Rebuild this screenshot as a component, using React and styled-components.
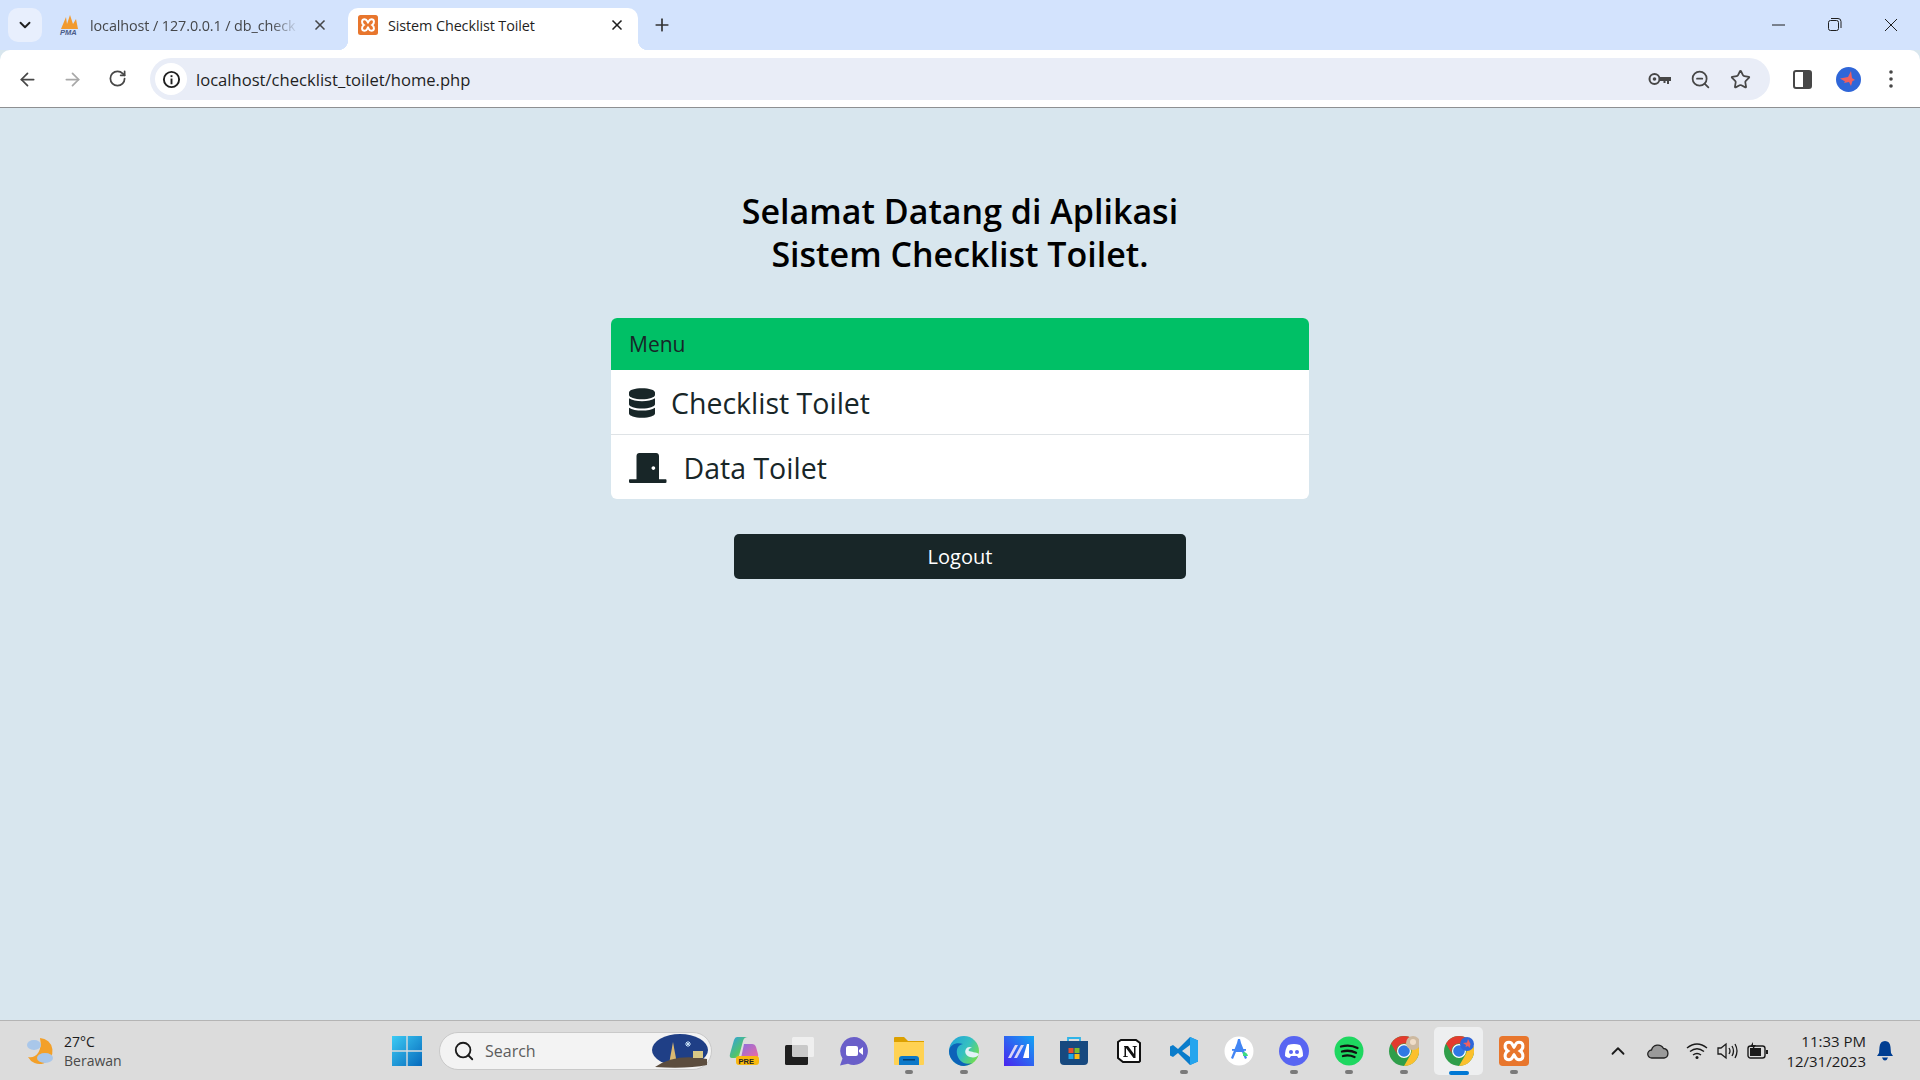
import React from 'react';
import styled, { createGlobalStyle } from 'styled-components';
import { FaDatabase, FaDoorClosed } from 'react-icons/fa';
import { ChevronDown, ChevronUp, X, Plus, ArrowLeft, ArrowRight, RotateCw, Star, ZoomOut, Search } from 'lucide-react';

const Global = createGlobalStyle`
    html, body { margin: 0; padding: 0; height: 100%; overflow: hidden; }
    body { font-family: "Open Sans", "Noto Sans", sans-serif; }
    * { box-sizing: border-box; }
`;

const Shell = styled.div`
    display: flex;
    flex-direction: column;
    height: 100vh;
    background: #d8e6ee;
`;

// ---- browser chrome
const TabStrip = styled.div`
    display: flex;
    height: 50px;
    padding-top: 8px;
    background: #d3e3fd;
`;

const TabList = styled.button`
    width: 34px;
    height: 34px;
    margin-left: 8px;
    border: 0;
    padding: 0;
    border-radius: 10px;
    background: #e8effd;
    display: flex;
    align-items: center;
    justify-content: center;
    color: #1f1f1f;
`;

const Tab = styled.div`
    position: relative;
    display: flex;
    align-items: center;
    width: ${p => p.$width}px;
    margin-left: ${p => p.$left}px;
    padding: 0 ${p => p.$active ? 13 : 4}px 8px ${p => p.$active ? 10 : 5}px;
    gap: ${p => p.$active ? 10 : 9}px;
    height: 42px;
    border-radius: 10px 10px 0 0;
    background: ${p => p.$active ? '#fff' : 'transparent'};
    color: ${p => p.$active ? '#1f1f1f' : '#45474a'};
    font-size: 14.4px;
    ${p => p.$active && `
        &::before, &::after {
            content: '';
            position: absolute;
            bottom: 0;
            width: 10px;
            height: 10px;
        }
        &::before { left: -10px; background: radial-gradient(circle at 0 0, transparent 10px, #fff 10.5px); }
        &::after { right: -10px; background: radial-gradient(circle at 100% 0, transparent 10px, #fff 10.5px); }
    `}
`;

const TabTitle = styled.span`
    flex: 1;
    white-space: nowrap;
    letter-spacing: -0.1px;
    ${p => p.$fade && `
        -webkit-mask-image: linear-gradient(to right, #000 85%, transparent 98%);
        mask-image: linear-gradient(to right, #000 85%, transparent 98%);
    `}
`;

const NewTab = styled.div`
    margin-left: 14px;
    height: 34px;
    display: flex;
    align-items: center;
    color: #333;
`;

const WindowControls = styled.div`
    margin-left: auto;
    display: flex;
    height: 34px;
    align-items: center;
    padding-right: 1px;
`;

const WinButton = styled.div`
    width: ${p => p.$w}px;
    display: flex;
    justify-content: center;
    color: #1f1f1f;
`;

const Toolbar = styled.div`
    display: flex;
    align-items: center;
    height: 58px;
    padding-top: 1px;
    background: #fff;
    border-radius: 10px 10px 0 0;
    border-bottom: 1px solid #8e9092;
`;

const NavButton = styled.div`
    width: ${p => p.$w || 45}px;
    display: flex;
    justify-content: center;
    color: ${p => p.$dim ? '#a8a8a8' : '#474747'};
`;

const NavGroup = styled.div`
    display: flex;
    padding-left: 5px;
    width: 150px;
`;

const Omnibox = styled.div`
    display: flex;
    align-items: center;
    width: 1620px;
    height: 42px;
    border-radius: 21px;
    background: #e9edf7;
    padding: 0 10px 0 5px;
`;

const InfoBadge = styled.div`
    width: 32px;
    height: 32px;
    border-radius: 50%;
    background: #fff;
    display: flex;
    align-items: center;
    justify-content: center;
`;

const Url = styled.div`
    margin-left: 9px;
    font-size: 16.6px;
    color: #1f1f1f;
    flex: 1;
`;

const OmniIcons = styled.div`
    display: flex;
    color: #474747;
`;

const OmniIcon = styled.div`
    width: 40px;
    display: flex;
    align-items: center;
    justify-content: center;
`;

const Trailing = styled.div`
    display: flex;
    align-items: center;
    color: #474747;
`;

const Avatar = styled.div`
    width: 25px;
    height: 25px;
    border-radius: 50%;
    background: #2f66d8;
    display: flex;
    align-items: center;
    justify-content: center;
`;

// ---- page
const Page = styled.main`
    flex: 1;
    display: flex;
    flex-direction: column;
    align-items: center;
    padding-top: 82px;
`;

const Heading = styled.h1`
    margin: 0;
    font-size: 34px;
    line-height: 43px;
    font-weight: 600;
    text-align: center;
    color: #000;
`;

const Card = styled.section`
    width: 698px;
    margin-top: 42px;
    border-radius: 6px;
    overflow: hidden;
    background: #fff;
`;

const CardHeader = styled.div`
    height: 52px;
    padding: 0 18px;
    display: flex;
    align-items: center;
    font-size: 21px;
    background: #00c066;
    color: #182628;
`;

const MenuRow = styled.a`
    display: flex;
    align-items: center;
    height: ${p => p.$last ? 64 : 65}px;
    padding: 1px 0 0 18px;
    gap: ${p => p.$gap}px;
    font-size: 28.5px;
    color: #182628;
    border-bottom: ${p => p.$last ? 'none' : '1px solid #dfe3e6'};
    svg { width: ${p => p.$iconWidth}px; height: 30px; flex: none; }
`;

const LogoutButton = styled.button`
    width: 452px;
    height: 45px;
    margin-top: 35px;
    border: 0;
    border-radius: 5px;
    background: #182628;
    color: #fff;
    font-family: inherit;
    font-size: 20px;
`;

// ---- taskbar
const Taskbar = styled.footer`
    display: flex;
    align-items: center;
    height: 60px;
    background: #dcdcdc;
    border-top: 1px solid #b4b4b4;
`;

const Weather = styled.div`
    width: 379px;
    display: flex;
    align-items: center;
    gap: 8px;
    padding-left: 24px;
`;

const WeatherText = styled.div`
    font-size: 14px;
    line-height: 19px;
    color: #1b1b1b;
    span { display: block; color: #4a4a4a; }
`;

const TaskIcon = styled.div`
    position: relative;
    width: 55px;
    height: 48px;
    display: flex;
    align-items: center;
    justify-content: center;
    &::before {
        content: ${p => p.$active ? "''" : 'none'};
        position: absolute;
        inset: 0 3px;
        border-radius: 5px;
        background: #eeeff0;
    }
    &::after {
        content: ${p => p.$running || p.$active ? "''" : 'none'};
        position: absolute;
        bottom: ${p => p.$active ? 0 : 1}px;
        left: 50%;
        width: ${p => p.$active ? 20 : 8}px;
        height: 4px;
        margin-left: ${p => p.$active ? -10 : -4}px;
        border-radius: 2px;
        background: ${p => p.$active ? '#0078d4' : '#7a7a7a'};
    }
    svg { position: relative; }
`;

const SearchBox = styled.div`
    width: 273px;
    height: 38px;
    margin: 0 4px 0 5px;
    padding: 0 2px 0 13px;
    display: flex;
    align-items: center;
    gap: 10px;
    border-radius: 19px;
    background: #f3f3f3;
    border: 1px solid #c9c9c9;
    font-size: 16px;
    color: #5c5c5c;
    flex: none;
`;

const SearchLabel = styled.span`
    flex: 1;
`;

const Tray = styled.div`
    display: flex;
    align-items: center;
    margin-left: 57px;
    color: #1b1b1b;
`;

const TrayIcon = styled.div`
    width: ${p => p.$w}px;
    display: flex;
    justify-content: center;
`;

const Clock = styled.div`
    width: 90px;
    text-align: right;
    font-size: 15px;
    line-height: 20px;
    color: #1b1b1b;
    white-space: nowrap;
`;

const BellWrap = styled.div`
    margin-left: 11px;
    display: flex;
`;

const XamppIcon = ({ size = 20 }) => (
    <svg width={size} height={size} viewBox="0 0 24 24">
        <rect width="24" height="24" rx="3" fill="#e8762d" />
        <path d="M8 5c3 0 3 3 4 4 1-1 1-4 4-4 4 0 4 5 1 7 3 2 3 7-1 7-3 0-3-3-4-4-1 1-1 4-4 4-4 0-4-5-1-7-3-2-3-7 1-7z" fill="none" stroke="#fff" strokeWidth="2.4" />
    </svg>
);

const PmaIcon = () => (
    <svg width="22" height="22" viewBox="0 0 22 22">
        <path d="M2 15 7 3l1 7 3-9 3 9 3-5 2 10z" fill="#f29a2e" />
        <text x="1" y="21" fontSize="7.5" fontWeight="700" fontStyle="italic" fontFamily="Liberation Sans, sans-serif" fill="#4a5c88">PMA</text>
    </svg>
);

const Butterfly = ({ size = 20 }) => (
    <svg width={size} height={size} viewBox="0 0 20 20">
        <path d="M13 2 10 8 2 9.500l5 3-1 1.500 5-1 2 4 1.500-5 2.500-1-3-2z" fill="#f0605f" />
    </svg>
);

const ChromeIcon = ({ children }) => (
    <svg width="30" height="30" viewBox="0 0 30 30">
        <circle cx="15" cy="15" r="15" fill="#2f9e4a" />
        <path d="M15 0a15 15 0 0 1 13 7.500H15a7.500 7.500 0 0 0-6.500 11.200L2 7.500A15 15 0 0 1 15 0z" fill="#e33b2e" />
        <path d="M28 7.500A15 15 0 0 1 15 30l6.500-11.200A7.500 7.500 0 0 0 15 7.500z" fill="#fbc02d" />
        <circle cx="15" cy="15" r="7" fill="#fff" />
        <circle cx="15" cy="15" r="5.800" fill="#2f78e4" />
        {children}
    </svg>
);

const apps = [
    {
        key: 'copilot',
        icon: (
            <svg width="30" height="30" viewBox="0 0 30 30">
                <defs>
                    <linearGradient id="copL" x1="0" y1="0" x2="1" y2="1">
                        <stop offset="0" stopColor="#2f9fe8" />
                        <stop offset="0.6" stopColor="#52c46a" />
                        <stop offset="1" stopColor="#e8d23a" />
                    </linearGradient>
                    <linearGradient id="copR" x1="0" y1="0" x2="1" y2="1">
                        <stop offset="0" stopColor="#8a6ee0" />
                        <stop offset="1" stopColor="#f06aa0" />
                    </linearGradient>
                </defs>
                <path d="M15 8h8q3 0 4 3l2 7q1 4-3 4H12z" fill="url(#copR)" />
                <path d="M8 1h11q-4 0-5 4l-4 15q-1 2-4 2H3q-3 0-2-4L5 4q1-3 3-3z" fill="url(#copL)" />
                <rect x="7" y="20" width="23" height="9" rx="3" fill="#f8b90f" />
                <text x="9.500" y="27.500" fontSize="7.500" fontWeight="800" fontFamily="Liberation Sans, sans-serif" fill="#222">PRE</text>
            </svg>
        ),
    },
    {
        key: 'taskview',
        icon: (
            <svg width="30" height="30" viewBox="0 0 30 30">
                <rect x="1" y="9" width="23" height="20" rx="1.500" fill="#1f1f1f" />
                <rect x="8" y="1" width="22" height="20" rx="1.500" fill="#f4f4f4" fillOpacity="0.8" />
            </svg>
        ),
    },
    {
        key: 'meet',
        icon: (
            <svg width="30" height="30" viewBox="0 0 30 30">
                <path d="M15 1a14 14 0 1 1-6 26.700L1 29.500l2.500-7A14 14 0 0 1 15 1z" fill="#6a5fc9" />
                <rect x="7" y="10" width="12" height="10" rx="2" fill="#fff" />
                <path d="m20 14 4-3v8l-4-3z" fill="#fff" />
            </svg>
        ),
    },
    {
        key: 'explorer',
        running: true,
        icon: (
            <svg width="32" height="30" viewBox="0 0 32 30">
                <path d="M1 2q0-1 1-1h9l4 4h16v6H1z" fill="#dca000" />
                <path d="M1 6h30v22q0 1-1 1H2q-1 0-1-1z" fill="#ffd253" />
                <path d="M6 29v-6q0-3 3-3h14q3 0 3 3v6z" fill="#0c78c8" />
                <rect x="10" y="23" width="12" height="1.500" fill="#053f70" />
            </svg>
        ),
    },
    {
        key: 'edge',
        running: true,
        icon: (
            <svg width="30" height="30" viewBox="0 0 30 30">
                <defs>
                    <linearGradient id="edg" x1="0" y1="0" x2="1" y2="0.6">
                        <stop offset="0" stopColor="#1f9fdc" />
                        <stop offset="0.6" stopColor="#35c1c0" />
                        <stop offset="1" stopColor="#6fdc55" />
                    </linearGradient>
                </defs>
                <circle cx="15" cy="15" r="15" fill="url(#edg)" />
                <path d="M0 15C1 8 8 6 14 8c-5 1-7 5-6 10 1 6 7 12 15 9a15 15 0 0 1-8 3C7 30 0 23 0 15z" fill="#0d62b8" />
                <path d="M30 18c-1 3-5 4-9 3-4-1-6-5-4-8 1-2 4-3 6-1-3 0-4 2-3 3 2 1 7 1 10 3z" fill="#e3f2f7" />
            </svg>
        ),
    },
    {
        key: 'ma',
        icon: (
            <svg width="30" height="30" viewBox="0 0 30 30">
                <defs>
                    <linearGradient id="ma" x1="0" y1="1" x2="1" y2="0">
                        <stop offset="0" stopColor="#4a23ee" />
                        <stop offset="1" stopColor="#12a5f4" />
                    </linearGradient>
                </defs>
                <rect width="30" height="30" fill="url(#ma)" />
                <path d="M4 22 11 9h3L7 22zM10 22l7-13h3l-7 13z" fill="#dcd6f7" />
                <path d="M19 22 23 8h2v14z" fill="#fff" />
            </svg>
        ),
    },
    {
        key: 'store',
        icon: (
            <svg width="30" height="30" viewBox="0 0 30 30">
                <path d="M9 6V2h12v4" fill="none" stroke="#2fb4e8" strokeWidth="1.800" />
                <path d="M1 5h28v20q0 4-4 4H5q-4 0-4-4z" fill="#17497f" />
                <rect x="9.500" y="12" width="5" height="5" fill="#e9502e" />
                <rect x="15.500" y="12" width="5" height="5" fill="#7dbb2e" />
                <rect x="9.500" y="18" width="5" height="5" fill="#1ea7e8" />
                <rect x="15.500" y="18" width="5" height="5" fill="#fbbb14" />
            </svg>
        ),
    },
    {
        key: 'notion',
        icon: (
            <svg width="24" height="24" viewBox="0 0 24 24">
                <path d="M4 1h15l4 3v18l-1 1H6l-5-4V3z" fill="#fff" stroke="#111" strokeWidth="2" />
                <path d="M7 7h4l6 8V8l-1.500-.5V7H20v.5L18.500 8v11h-2L9 9v8l2 .6v.4H6v-.4l1.500-.6V8L7 7.500z" fill="#111" />
            </svg>
        ),
    },
    {
        key: 'vscode',
        running: true,
        icon: (
            <svg width="30" height="30" viewBox="0 0 30 30">
                <path d="M21 1 9 13 4 9 1 10.500v9L4 21l5-4 12 12 8-3.500V4.500zM21 9v12l-8-6z" fill="#0a7ccb" />
                <path d="M21 1l8 3.500v21L21 29z" fill="#25a5ee" />
            </svg>
        ),
    },
    {
        key: 'studio',
        icon: (
            <svg width="30" height="30" viewBox="0 0 30 30">
                <circle cx="15" cy="15" r="14.500" fill="#fff" />
                <path d="M14 3h2l1 4 6 15-2 1-3-7h-6l-3 7-2-1 6-15z" fill="#4285f4" fillRule="evenodd" />
                <rect x="8" y="13" width="14" height="1.800" fill="#4285f4" />
                <path d="M19 16q4 0 5 4h-5z" fill="#3ddc84" />
            </svg>
        ),
    },
    {
        key: 'discord',
        running: true,
        icon: (
            <svg width="30" height="30" viewBox="0 0 30 30">
                <circle cx="15" cy="15" r="15" fill="#5865f2" />
                <path d="M9 9q6-2 12 0 3 4 3 11-2 2-4.500 2L18 20h-6l-1.500 2Q8 22 6 20q0-7 3-11z" fill="#fff" />
                <circle cx="12" cy="16" r="2" fill="#5865f2" />
                <circle cx="18" cy="16" r="2" fill="#5865f2" />
            </svg>
        ),
    },
    {
        key: 'spotify',
        running: true,
        icon: (
            <svg width="30" height="30" viewBox="0 0 30 30">
                <circle cx="15" cy="15" r="14.500" fill="#1ed760" />
                <path d="M7 10.500q9-2.500 16.500 1.500M8 15.500q7.500-2 14 1.300M9 20q6-1.500 11.500 1" fill="none" stroke="#111" strokeWidth="2.300" strokeLinecap="round" />
            </svg>
        ),
    },
    {
        key: 'chrome-a',
        running: true,
        icon: (
            <ChromeIcon>
                <circle cx="24" cy="7" r="7" fill="#cdb9a0" />
                <circle cx="24" cy="6" r="3" fill="#f0ddc8" />
            </ChromeIcon>
        ),
    },
    {
        key: 'chrome-b',
        active: true,
        icon: (
            <ChromeIcon>
                <circle cx="23" cy="8" r="7" fill="#2f66d8" />
                <path d="M24 3l-1 3.500-4 .5 3 2-.5 2 2.500-1 1.500 2 1-4z" fill="#f0605f" />
            </ChromeIcon>
        ),
    },
    { key: 'xampp', running: true, icon: <XamppIcon size={30} /> },
];

const App = () => {
    return (
        <Shell>
            <Global />
            <TabStrip>
                <TabList><ChevronDown size={18} strokeWidth={2.500} /></TabList>
                <Tab $width={278} $left={12}>
                    <PmaIcon />
                    <TabTitle $fade>localhost / 127.0.0.1 / db_check</TabTitle>
                    <X size={16} strokeWidth={2.500} />
                </Tab>
                <Tab $active $width={290} $left={16}>
                    <XamppIcon />
                    <TabTitle>Sistem Checklist Toilet</TabTitle>
                    <X size={16} strokeWidth={2.500} />
                </Tab>
                <NewTab><Plus size={20} strokeWidth={2} /></NewTab>
                <WindowControls>
                    <WinButton $w={55}>
                        <svg width="16" height="16" viewBox="0 0 16 16"><path d="M2 8h13" stroke="currentColor" fill="none" /></svg>
                    </WinButton>
                    <WinButton $w={58}>
                        <svg width="16" height="16" viewBox="0 0 16 16">
                            <rect x="2.500" y="3.500" width="10" height="10" rx="2" stroke="currentColor" fill="none" />
                            <path d="M5 1.500h7q3 0 3 3V11" stroke="currentColor" fill="none" />
                        </svg>
                    </WinButton>
                    <WinButton $w={56}>
                        <svg width="16" height="16" viewBox="0 0 16 16"><path d="M2 2l12 12M14 2 2 14" stroke="currentColor" fill="none" /></svg>
                    </WinButton>
                </WindowControls>
            </TabStrip>

            <Toolbar>
                <NavGroup>
                    <NavButton><ArrowLeft size={21} strokeWidth={2} /></NavButton>
                    <NavButton $dim><ArrowRight size={21} strokeWidth={2} /></NavButton>
                    <NavButton><RotateCw size={19} strokeWidth={2.200} /></NavButton>
                </NavGroup>
                <Omnibox>
                    <InfoBadge>
                        <svg width="19" height="19" viewBox="0 0 20 20">
                            <circle cx="10" cy="10" r="8" fill="none" stroke="#1f1f1f" strokeWidth="2" />
                            <rect x="9" y="9" width="2" height="6" fill="#1f1f1f" />
                            <rect x="9" y="5.500" width="2" height="2" fill="#1f1f1f" />
                        </svg>
                    </InfoBadge>
                    <Url>localhost/checklist_toilet/home.php</Url>
                    <OmniIcons>
                        <OmniIcon>
                            <svg width="24" height="14" viewBox="0 0 24 14">
                                <circle cx="6.500" cy="7" r="5" fill="none" stroke="currentColor" strokeWidth="2" />
                                <circle cx="6.500" cy="7" r="1.800" fill="currentColor" />
                                <path d="M11 5h12v4h-2v3h-2V9h-1.500v2h-2V9H11z" fill="currentColor" />
                            </svg>
                        </OmniIcon>
                        <OmniIcon><ZoomOut size={21} strokeWidth={2} /></OmniIcon>
                        <OmniIcon><Star size={21} strokeWidth={2} /></OmniIcon>
                    </OmniIcons>
                </Omnibox>
                <Trailing>
                    <NavButton $w={64}>
                        <svg width="19" height="19" viewBox="0 0 19 19">
                            <rect x="1" y="1" width="17" height="17" rx="2" fill="none" stroke="currentColor" strokeWidth="2" />
                            <rect x="10" y="1" width="8" height="17" fill="currentColor" />
                        </svg>
                    </NavButton>
                    <NavButton $w={28}>
                        <Avatar><Butterfly /></Avatar>
                    </NavButton>
                    <NavButton $w={58}>
                        <svg width="4" height="18" viewBox="0 0 4 18">
                            <circle cx="2" cy="2" r="1.800" fill="currentColor" />
                            <circle cx="2" cy="9" r="1.800" fill="currentColor" />
                            <circle cx="2" cy="16" r="1.800" fill="currentColor" />
                        </svg>
                    </NavButton>
                </Trailing>
            </Toolbar>

            <Page>
                <Heading>Selamat Datang di Aplikasi<br />Sistem Checklist Toilet.</Heading>
                <Card>
                    <CardHeader>Menu</CardHeader>
                    <MenuRow $gap={16} $iconWidth={26}><FaDatabase />Checklist Toilet</MenuRow>
                    <MenuRow $last $gap={17} $iconWidth={37.5}><FaDoorClosed />Data Toilet</MenuRow>
                </Card>
                <LogoutButton>Logout</LogoutButton>
            </Page>

            <Taskbar>
                <Weather>
                    <svg width="32" height="32" viewBox="0 0 32 32">
                        <path d="M16 3a13 13 0 1 1-12 19c7 2 15-5 12-19z" fill="#f3a029" />
                        <ellipse cx="10" cy="10" rx="7" ry="5" fill="#a9c7ea" />
                        <ellipse cx="21" cy="23" rx="8" ry="5" fill="#a9c7ea" />
                    </svg>
                    <WeatherText>27°C<span>Berawan</span></WeatherText>
                </Weather>
                <TaskIcon>
                    <svg width="30" height="30" viewBox="0 0 30 30">
                        <defs>
                            <linearGradient id="win" x1="0" y1="0" x2="1" y2="1">
                                <stop offset="0" stopColor="#3ccbf4" />
                                <stop offset="1" stopColor="#0669bc" />
                            </linearGradient>
                        </defs>
                        <path d="M0 0h14.300v14.300H0zM15.700 0H30v14.300H15.700zM0 15.700h14.300V30H0zM15.700 15.700H30V30H15.700z" fill="url(#win)" />
                    </svg>
                </TaskIcon>
                <SearchBox>
                    <Search size={22} color="#1b1b1b" strokeWidth={2} />
                    <SearchLabel>Search</SearchLabel>
                    <svg width="58" height="34" viewBox="0 0 58 34">
                        <ellipse cx="29" cy="16" rx="28" ry="16" fill="#1f3f86" />
                        <path d="M18 30 22 8l4 22z" fill="#d9b871" />
                        <path d="M4 33q20-14 52-8v6q-20 4-52 2z" fill="#5c4d3e" />
                        <path d="M34 10l6 0M37 7v6M35 8l4 4M39 8l-4 4" stroke="#c9e3f7" strokeWidth="1" />
                        <rect x="42" y="17" width="10" height="7" fill="#d8c886" />
                    </svg>
                </SearchBox>
                {apps.map(app => (
                    <TaskIcon key={app.key} $running={app.running} $active={app.active}>{app.icon}</TaskIcon>
                ))}
                <Tray>
                    <TrayIcon $w={40}><ChevronUp size={22} strokeWidth={2} /></TrayIcon>
                    <TrayIcon $w={40}>
                        <svg width="22" height="16" viewBox="0 0 22 16">
                            <path d="M5 15a4 4 0 0 1-.5-8 6.500 6.500 0 0 1 12-1.500A4.800 4.800 0 0 1 17 15z" fill="#9a9a9a" stroke="#222" strokeWidth="1.300" />
                        </svg>
                    </TrayIcon>
                    <TrayIcon $w={38}>
                        <svg width="22" height="18" viewBox="0 0 22 18">
                            <path d="M1 6q10-8 20 0M4 9.500q7-5.500 14 0M7 13q4-3 8 0" fill="none" stroke="#1b1b1b" strokeWidth="1.400" />
                            <circle cx="11" cy="15.500" r="1.500" fill="#1b1b1b" />
                        </svg>
                    </TrayIcon>
                    <TrayIcon $w={24}>
                        <svg width="22" height="18" viewBox="0 0 22 18">
                            <path d="M1 6v6h3l5 4V2L4 6z" fill="none" stroke="#1b1b1b" strokeWidth="1.300" />
                            <path d="M12 6q2 3 0 6M15 4q3 5 0 10M18 2q4 7 0 14" fill="none" stroke="#1b1b1b" strokeWidth="1.300" />
                        </svg>
                    </TrayIcon>
                    <TrayIcon $w={36}>
                        <svg width="22" height="18" viewBox="0 0 22 18">
                            <rect x="1" y="4" width="17" height="12" rx="2.500" fill="none" stroke="#1b1b1b" strokeWidth="1.400" />
                            <rect x="3" y="6" width="11" height="8" fill="#1b1b1b" />
                            <rect x="19" y="8" width="2" height="4" fill="#1b1b1b" />
                            <path d="M6 0 3 5h3l-1 4 4-6H6z" fill="#1b1b1b" />
                        </svg>
                    </TrayIcon>
                    <Clock>11:33 PM<br />12/31/2023</Clock>
                    <BellWrap>
                        <svg width="16" height="20" viewBox="0 0 16 20">
                            <path d="M8 0q5 0 5.500 6l.5 6 2 3H0l2-3 .5-6Q3 0 8 0z" fill="#003e92" />
                            <path d="M5 16.500h6q-1 3-3 3t-3-3z" fill="#003e92" />
                        </svg>
                    </BellWrap>
                </Tray>
            </Taskbar>
        </Shell>
    );
};

export default App;
